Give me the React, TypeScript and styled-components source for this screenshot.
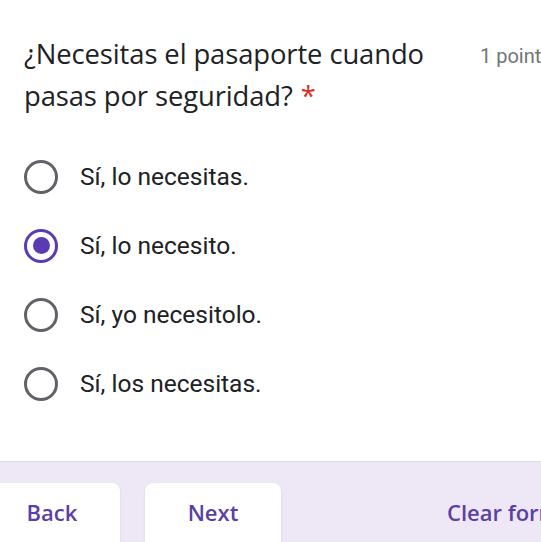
import React from "react";
import styled, { createGlobalStyle } from "styled-components";

const Global = createGlobalStyle`
  html, body { margin: 0; padding: 0; background: #ffffff; overflow: hidden; }
  body { width: 541px; height: 542px; }
  #root { width: 541px; height: 542px; overflow: hidden; }
`;

const Page = styled.div`
  width: 541px;
  height: 542px;
  display: flex;
  flex-direction: column;
  overflow: hidden;
  background: #ffffff;
`;

const Card = styled.section`
  flex: 0 0 auto;
  height: 462px;
  box-sizing: border-box;
  padding: 33px 0 0 24px;
  border-bottom: 1px solid #dadce0;
  background: #ffffff;
`;

const Header = styled.div`
  display: flex;
  align-items: flex-start;
  white-space: nowrap;
`;

const Title = styled.h1`
  margin: 0;
  width: 456px;
  padding-right: 16px;
  box-sizing: border-box;
  flex: 0 0 auto;
  font-family: "Open Sans", sans-serif;
  font-weight: 400;
  font-size: 27.4px;
  letter-spacing: -0.1px;
  line-height: 42px;
  color: #202124;
  white-space: normal;
`;

const Star = styled.span`
  color: #d93025;
  margin-left: 8px;
`;

const Points = styled.span`
  font-family: Roboto, sans-serif;
  font-size: 20px;
  line-height: 42px;
  padding-top: 2px;
  color: #70757a;
`;

const Options = styled.div`
  display: flex;
  flex-direction: column;
  margin-top: 42px;
  gap: 34px;
`;

const Option = styled.label`
  display: flex;
  align-items: center;
  gap: 22px;
  height: 35px;
`;

const Radio = styled.span<{ $checked?: boolean }>`
  box-sizing: border-box;
  width: 34px;
  height: 34px;
  border-radius: 50%;
  border: 3.5px solid ${(p) => (p.$checked ? "#5b3cb0" : "#5f6368")};
  display: flex;
  align-items: center;
  justify-content: center;
  flex: 0 0 auto;
  &::after {
    content: "";
    display: ${(p) => (p.$checked ? "block" : "none")};
    width: 17px;
    height: 17px;
    border-radius: 50%;
    background: #5b3cb0;
  }
`;

const OptionText = styled.span`
  font-family: Roboto, sans-serif;
  font-size: 24.5px;
  color: #202124;
`;

const Footer = styled.footer`
  flex: 1 1 auto;
  background: #ede7f6;
  display: flex;
  align-items: flex-start;
  padding-top: 21px;
  white-space: nowrap;
`;

const NavButton = styled.button<{ $offset?: number }>`
  flex: 0 0 auto;
  width: 136px;
  height: 70px;
  margin-left: ${(p) => p.$offset ?? 0}px;
  border: none;
  border-radius: 8px;
  background: #ffffff;
  box-shadow: 0 1px 2px rgba(60, 64, 67, 0.15);
  font-family: "Open Sans", sans-serif;
  font-weight: 600;
  font-size: 22px;
  color: #5b3ea6;
  padding: 0 0 12px;
`;

const ClearButton = styled.button`
  flex: 0 0 auto;
  margin-left: 166px;
  border: none;
  background: transparent;
  padding: 0;
  height: 58px;
  font-family: "Open Sans", sans-serif;
  font-weight: 600;
  font-size: 22px;
  color: #5b3ea6;
`;

const options = [
  { text: "Sí, lo necesitas.", checked: false },
  { text: "Sí, lo necesito.", checked: true },
  { text: "Sí, yo necesitolo.", checked: false },
  { text: "Sí, los necesitas.", checked: false },
];

export default function App() {
  return (
    <Page>
      <Global />
      <Card>
        <Header>
          <Title>
            ¿Necesitas el pasaporte cuando pasas por seguridad?<Star>*</Star>
          </Title>
          <Points>1 point</Points>
        </Header>
        <Options>
          {options.map((o) => (
            <Option key={o.text}>
              <Radio $checked={o.checked} />
              <OptionText>{o.text}</OptionText>
            </Option>
          ))}
        </Options>
      </Card>
      <Footer>
        <NavButton $offset={-16}>Back</NavButton>
        <NavButton $offset={25}>Next</NavButton>
        <ClearButton>Clear form</ClearButton>
      </Footer>
    </Page>
  );
}
